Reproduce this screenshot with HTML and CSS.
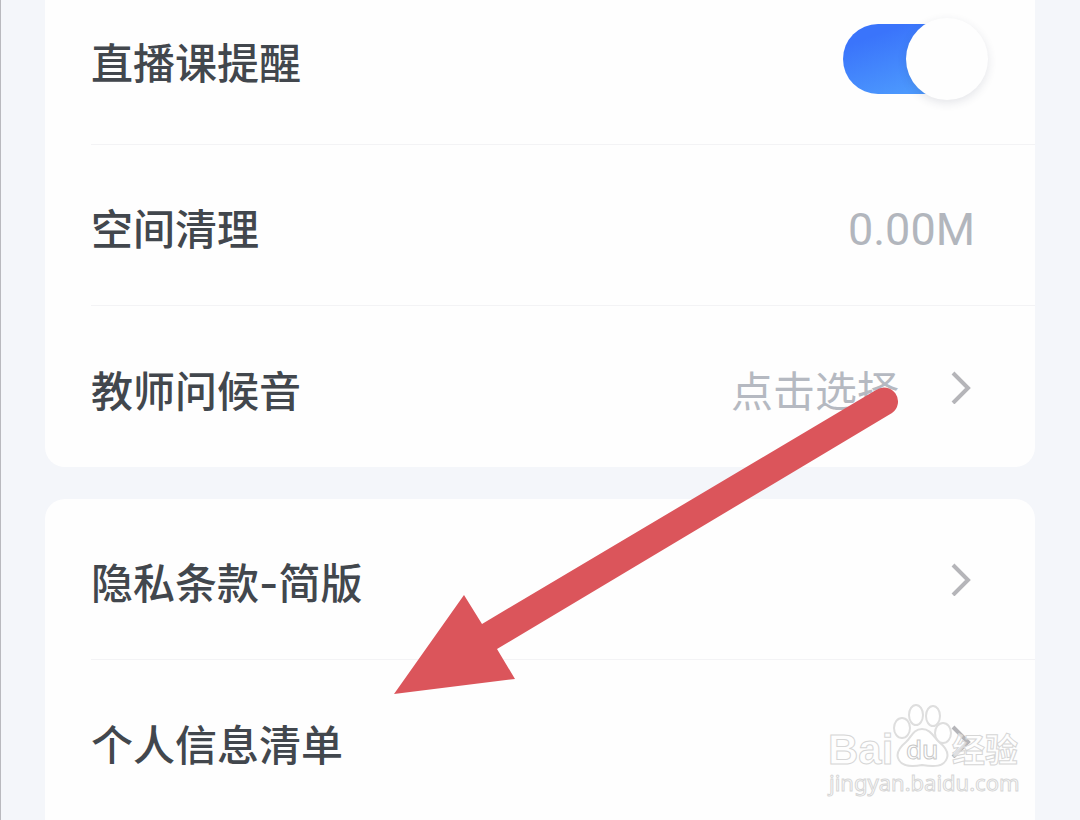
FILE: index.html
```html
<!DOCTYPE html>
<html lang="zh-CN">
<head>
    <meta charset="UTF-8">
    <meta name="viewport" content="width=device-width, initial-scale=1.0">
    <title>设置</title>
    <link rel="stylesheet" href="styles.css">
</head>
<body>
    <main class="settings">
        <section class="card card-top">
            <div class="row row-switch">
                <label class="label" for="liveRemind">直播课提醒</label>
                <input type="checkbox" class="switch" id="liveRemind" checked>
            </div>
            <div class="row">
                <span class="label">空间清理</span>
                <span class="value size">0.00M</span>
            </div>
            <a href="#greeting" class="row">
                <span class="label">教师问候音</span>
                <span class="value">点击选择</span>
                <svg class="chevron" viewBox="0 0 20 34"><path d="M2 3l15 15L2 33"/></svg>
            </a>
        </section>

        <section class="card card-bottom">
            <a href="#privacy" class="row">
                <span class="label">隐私条款-简版</span>
                <svg class="chevron" viewBox="0 0 20 34"><path d="M2 3l15 15L2 33"/></svg>
            </a>
            <a href="#info" class="row">
                <span class="label">个人信息清单</span>
                <svg class="chevron" viewBox="0 0 20 34"><path d="M2 3l15 15L2 33"/></svg>
            </a>
        </section>
    </main>

    <svg class="arrow" viewBox="0 0 506 314">
        <path d="M1 310L71 211L89 240L483 6A14 14 0 0 1 499 29L104 265L122 295Z"/>
    </svg>

    <svg class="watermark" viewBox="0 0 200 100">
        <text class="wm-name" x="4" y="64">Bai</text>
        <g class="paw">
            <ellipse cx="78" cy="28" rx="8" ry="10"/>
            <ellipse cx="92" cy="15" rx="7" ry="10"/>
            <ellipse cx="109" cy="16" rx="7" ry="10"/>
            <ellipse cx="119" cy="33" rx="8" ry="10"/>
            <path d="M98 29c-9 0-11 9-16 13c-6 5-10 10-8 16c3 9 13 9 24 7c12 2 22 2 25-7c2-6-3-12-8-16c-5-4-8-13-17-13z"/>
        </g>
        <text class="wm-du" x="82" y="59">du</text>
        <text class="wm-cn" x="128" y="62">经验</text>
        <text class="wm-url" x="5" y="91">jingyan.baidu.com</text>
    </svg>
</body>
</html>
```
FILE: styles.css
```css
* {
    box-sizing: border-box;
}
body {
    margin: 0;
    min-height: 100vh;
    position: relative;
    background-color: #f4f6fa;
    border-left: 1px solid #b9b9be;
    font-family: Inter, 'Noto Sans CJK SC', sans-serif;
    overflow-x: hidden;
}
.settings {
    display: flex;
    flex-direction: column;
    gap: 32px;
    padding: 0 45px 0 44px;
}
.card {
    background-color: #fefefe;
    padding-left: 46px;
}
.card-top {
    border-radius: 0 0 20px 20px;
}
.card-bottom {
    border-radius: 20px 20px 0 0;
}
.row {
    display: flex;
    align-items: center;
    min-height: 161px;
    padding-right: 60px;
    border-bottom: 1px solid #f3f3f5;
    color: #42474d;
    text-decoration: none;
}
.row:last-child {
    border-bottom: none;
}
.row-switch {
    min-height: 145px;
    padding-right: 47px;
    padding-bottom: 26px;
}
.label {
    flex: 1;
    padding-top: 10px;
    font-size: 42px;
    line-height: 60px;
    font-weight: 500;
}
.value {
    padding-top: 10px;
    font-size: 42px;
    line-height: 60px;
    color: #b5b9c1;
}
.value.size {
    font-family: Roboto, sans-serif;
    font-size: 45px;
    color: #b2b6bd;
}
.chevron {
    width: 20px;
    height: 34px;
    margin: 0 4px 0 52px;
    fill: none;
    stroke: #b5b5b9;
    stroke-width: 4;
}
.switch {
    appearance: none;
    position: relative;
    width: 145px;
    height: 70px;
    margin: 0;
    border-radius: 35px;
    background: #dcdfe5;
    cursor: pointer;
}
.switch:checked {
    background: linear-gradient(160deg, #3a74fb 20%, #4c98fd 80%) no-repeat;
    background-size: 120px 100%;
}
.switch::before {
    content: "";
    position: absolute;
    top: -6px;
    left: 0;
    width: 82px;
    height: 82px;
    border-radius: 50%;
    background-color: #fefefe;
    box-shadow: 0 3px 10px rgba(40, 50, 80, 0.12);
}
.switch:checked::before {
    left: auto;
    right: 0;
}
.arrow {
    position: absolute;
    top: 384px;
    left: 392px;
    width: 506px;
    height: 314px;
    fill: #db555b;
    pointer-events: none;
}
.watermark {
    position: absolute;
    top: 700px;
    right: 56px;
    width: 200px;
    height: 100px;
    fill: rgba(255, 255, 255, 0.6);
    stroke: #d6d6d6;
    stroke-width: 1;
    pointer-events: none;
}
.paw {
    stroke: #dedede;
    stroke-width: 2;
}
.wm-name {
    font-family: 'Liberation Sans', Arial, sans-serif;
    font-size: 42px;
    font-weight: 700;
}
.wm-du {
    font-family: 'Noto Sans', sans-serif;
    font-size: 26px;
    font-weight: 500;
    stroke: #c8c8c8;
}
.wm-cn {
    font-family: 'Noto Sans CJK SC', sans-serif;
    font-size: 33px;
    font-weight: 700;
}
.wm-url {
    font-family: 'Noto Sans', sans-serif;
    font-size: 22px;
}
```
